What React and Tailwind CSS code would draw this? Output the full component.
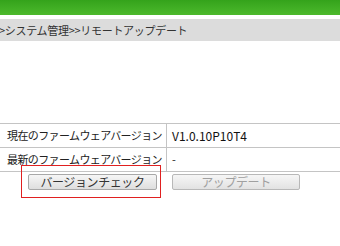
export default function App() {
  const font = { fontFamily: '"Noto Sans CJK JP", "Noto Sans", sans-serif' };
  return (
    <div className="w-[340px] h-[246px] bg-white overflow-hidden text-[#333]" style={font}>
      <div className="h-[15px] bg-gradient-to-b from-[#34a31b] to-[#4cb92c]" />
      <div className="h-[4px] bg-white" />
      <div className="h-[22px] bg-[#dcdcdc] flex items-center text-[11px] tracking-[-0.3px] text-[#333] -ml-[1px] leading-none">
        &gt;システム管理&gt;&gt;リモートアップデート
      </div>
      <div className="h-[82px]" />
      <div className="border-t border-[#c4c4c4] text-[11px] tracking-[-0.6px] text-[#222]">
        <div className="flex h-[24px] border-b border-[#c4c4c4]">
          <div className="w-[167px] flex items-center justify-end pr-[4px] border-r border-[#c4c4c4]">現在のファームウェアバージョン</div>
          <div className="flex items-center pl-[5px] tracking-normal text-[12px] text-[#111]">V1.0.10P10T4</div>
        </div>
        <div className="flex h-[24px] border-b border-[#c4c4c4]">
          <div className="w-[167px] flex items-center justify-end pr-[4px] border-r border-[#c4c4c4]">最新のファームウェアバージョン</div>
          <div className="flex items-center pl-[5px]">-</div>
        </div>
      </div>
      <div className="relative flex h-[28px]">
        <div className="absolute left-[21px] top-[-7px] w-[140px] h-[33px] border-[1.5px] border-[#e02020]" />
        <div className="ml-[28px] mt-[2px] w-[129px] h-[16px] rounded-[2px] border border-[#a8a8a8] bg-gradient-to-b from-[#f6f6f6] to-[#dedede] flex items-center justify-center text-[12px] tracking-[-0.4px] text-[#333]">
          バージョンチェック
        </div>
        <div className="ml-[15px] mt-[2px] w-[128px] h-[16px] rounded-[2px] border border-[#b8b8b8] bg-gradient-to-b from-[#f6f6f6] to-[#e2e2e2] flex items-center justify-center text-[12px] tracking-[-0.4px] text-[#a0a0a0]">
          アップデート
        </div>
      </div>
    </div>
  );
}
